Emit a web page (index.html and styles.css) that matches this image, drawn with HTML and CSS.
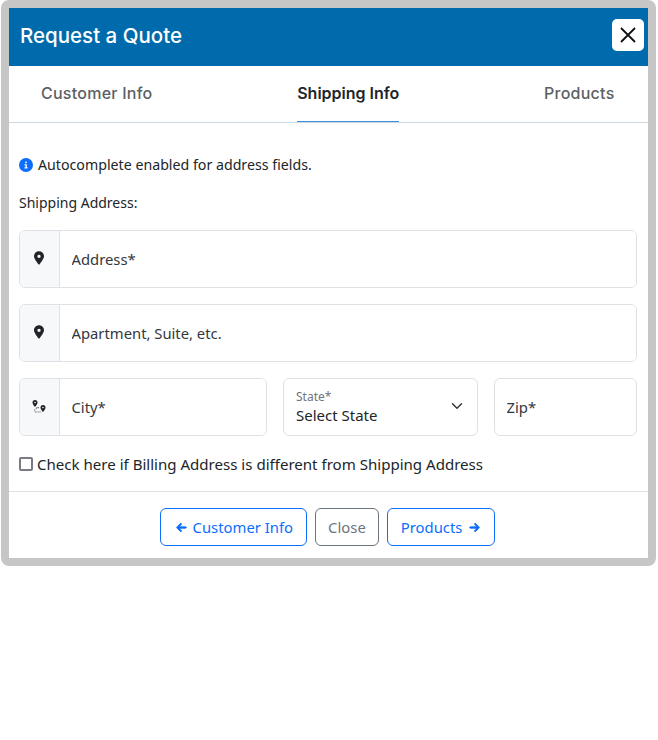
FILE: index.html
```html
<!DOCTYPE html>
<html lang="en">
<head>
<meta charset="utf-8">
<title>Request a Quote</title>
<link rel="stylesheet" href="styles.css">
</head>
<body>
<div class="modal">
  <header class="head">
    <h1 class="title">Request a Quote</h1>
    <button class="close-x" type="button" aria-label="Close">
      <svg viewBox="0 0 16 16" width="16" height="16"><path d="M1 1l14 14M15 1L1 15" stroke="#111" stroke-width="1.8" fill="none"/></svg>
    </button>
  </header>
  <nav class="tabs">
    <a class="tab">Customer Info</a>
    <a class="tab active">Shipping Info</a>
    <a class="tab">Products</a>
  </nav>
  <main class="body">
    <p class="info">
      <svg class="info-icon" viewBox="0 0 512 512"><path fill="#0d6efd" d="M256 512A256 256 0 1 0 256 0a256 256 0 1 0 0 512zM216 336h24V272H216c-13.3 0-24-10.7-24-24s10.7-24 24-24h48c13.3 0 24 10.7 24 24v88h8c13.3 0 24 10.7 24 24s-10.7 24-24 24H216c-13.3 0-24-10.7-24-24s10.7-24 24-24zm40-208a32 32 0 1 1 0 64 32 32 0 1 1 0-64z"/></svg>
      Autocomplete enabled for address fields.
    </p>
    <p class="section">Shipping Address:</p>
    <div class="group">
      <span class="addon"><svg class="pin" viewBox="0 0 384 512"><path fill="#212529" d="M215.7 499.2C267 435 384 279.4 384 192C384 86 298 0 192 0S0 86 0 192c0 87.4 117 243 168.3 307.2c12.3 15.3 35.1 15.3 47.4 0zM192 128a64 64 0 1 1 0 128 64 64 0 1 1 0-128z"/></svg></span>
      <input class="field" placeholder="Address*">
    </div>
    <div class="group">
      <span class="addon"><svg class="pin" viewBox="0 0 384 512"><path fill="#212529" d="M215.7 499.2C267 435 384 279.4 384 192C384 86 298 0 192 0S0 86 0 192c0 87.4 117 243 168.3 307.2c12.3 15.3 35.1 15.3 47.4 0zM192 128a64 64 0 1 1 0 128 64 64 0 1 1 0-128z"/></svg></span>
      <input class="field" placeholder="Apartment, Suite, etc.">
    </div>
    <div class="row">
      <div class="group city">
        <span class="addon"><svg class="route" viewBox="0 0 16 16"><path fill="#212529" d="M4 1a2.500 2.500 0 0 0-2.500 2.500C1.500 5.300 4 8 4 8s2.500-2.700 2.500-4.500A2.500 2.500 0 0 0 4 1zm0 1.700a.8.8 0 1 1 0 1.600.8.8 0 0 1 0-1.600zM12 6a2.500 2.500 0 0 0-2.500 2.500C9.500 10.300 12 13 12 13s2.500-2.700 2.500-4.500A2.500 2.500 0 0 0 12 6zm0 1.700a.8.8 0 1 1 0 1.600.8.8 0 0 1 0-1.600z"/><path d="M5.500 8.500H8M8 8.500l-4.500 2 .5 2.500H10.500" stroke="#555" stroke-width="1" stroke-dasharray="1 1" fill="none"/></svg></span>
        <input class="field" placeholder="City*">
      </div>
      <div class="state">
        <div class="state-text">
          <span class="state-label">State*</span>
          <span class="state-value">Select State</span>
        </div>
        <svg class="chev" viewBox="0 0 16 16"><path d="M2 5l6 6 6-6" stroke="#343a40" stroke-width="2" stroke-linecap="round" stroke-linejoin="round" fill="none"/></svg>
      </div>
      <input class="zip" placeholder="Zip*">
    </div>
    <label class="check"><input class="box" type="checkbox"> Check here if Billing Address is different from Shipping Address</label>
  </main>
  <footer class="foot">
    <button class="btn first" type="button"><svg class="arrow" viewBox="0 0 448 512"><path fill="#0d6efd" stroke="#0d6efd" stroke-width="40" d="M9.400 233.400c-12.500 12.500-12.500 32.800 0 45.300l160 160c12.500 12.500 32.800 12.500 45.300 0s12.500-32.800 0-45.300L109.200 288 416 288c17.700 0 32-14.300 32-32s-14.300-32-32-32l-306.700 0L214.600 118.600c12.500-12.500 12.500-32.800 0-45.300s-32.800-12.500-45.300 0l-160 160z"/></svg>Customer Info</button>
    <button class="btn muted" type="button">Close</button>
    <button class="btn last" type="button">Products<svg class="arrow" viewBox="0 0 448 512"><path fill="#0d6efd" stroke="#0d6efd" stroke-width="40" d="M438.600 278.600c12.500-12.500 12.500-32.800 0-45.300l-160-160c-12.500-12.500-32.800-12.500-45.300 0s-12.500 32.800 0 45.300L338.800 224 32 224c-17.700 0-32 14.300-32 32s14.300 32 32 32l306.700 0L233.400 393.400c-12.500 12.500-12.500 32.800 0 45.300s32.800 12.500 45.300 0l160-160z"/></svg></button>
  </footer>
</div>
</body>
</html>
```
FILE: styles.css
```css
* { box-sizing: border-box; }
html, body { margin: 0; padding: 0; background: #fff; }
body { font-family: "Noto Sans", "Open Sans", sans-serif; color: #212529; font-size: 15px; }
.modal { width: 655px; height: 566px; margin-left: 1px; border: 8px solid #c6c6c6; border-radius: 8px; background: #fff; display: flex; flex-direction: column; overflow: hidden; }
.head { height: 58px; background: #006bac; display: flex; align-items: center; justify-content: space-between; padding: 0 4px 4px 11px; flex: none; }
.title { margin: 0; font-family: Inter, Roboto, sans-serif; font-weight: 500; font-size: 20.5px; color: #fff; }
.close-x { width: 32px; height: 32px; padding: 0; border: 0; border-radius: 5px; background: #fff; display: flex; align-items: center; justify-content: center; }
.tabs { height: 57px; flex: none; display: flex; justify-content: space-between; padding: 0 33.500px 0 32px; border-bottom: 1px solid #cbd8e0; }
.tab { font-family: Inter, Roboto, sans-serif; font-weight: 500; font-size: 16px; letter-spacing: 0.25px; color: #5c5f63; line-height: 55px; height: 56px; }
.active { color: #212529; font-weight: 600; letter-spacing: 0; border-bottom: 1px solid #3d8fe0; }
.body { flex: 1; padding: 0 11px 0 10px; }
.info { margin: 32px 0 0; height: 20px; line-height: 18px; display: flex; align-items: center; gap: 5px; font-size: 14.2px; }
.info-icon { width: 14px; height: 14px; flex: none; }
.section { margin: 18px 0 0; height: 20px; line-height: 20px; font-size: 14px; }
.group { display: flex; height: 58px; margin-top: 16px; border: 1px solid #dee2e6; border-radius: 6px; overflow: hidden; }
.section + .group { margin-top: 17px; }
.addon { width: 40px; flex: none; background: #f7f8fa; border-right: 1px solid #dee2e6; display: flex; align-items: center; justify-content: center; padding-right: 1px; }
.pin { width: 10px; height: 14px; margin-top: -2px; }
.route { width: 16px; height: 16px; margin-top: -1px; }
.field, .zip { border: 0; outline: 0; min-width: 0; flex: 1; padding: 0 12px 0 11.5px; font: inherit; font-size: 14.8px; color: #212529; background: #fff; }
.field::placeholder, .zip::placeholder { color: #33383d; opacity: 1; }
.row { display: flex; gap: 16px; margin-top: 16px; }
.row .group { margin-top: 0; }
.city { width: 248px; flex: none; }
.state { width: 195px; height: 58px; flex: none; border: 1px solid #dee2e6; border-radius: 6px; display: flex; align-items: center; justify-content: space-between; padding: 0 14px 0 12px; }
.state-text { display: flex; flex-direction: column; }
.state-label { font-size: 12px; line-height: 17px; color: #6f757b; }
.state-value { font-size: 15px; line-height: 21px; color: #212529; }
.chev { width: 12px; height: 12px; margin-top: -2px; }
.zip { width: 143px; height: 58px; flex: none; border: 1px solid #dee2e6; border-radius: 6px; }
.check { display: flex; align-items: center; gap: 4px; margin-top: 18px; height: 20px; font-size: 15.07px; }
.box { appearance: none; width: 14px; height: 14px; margin: 0; border: 2px solid #7a7a85; border-radius: 2px; background: #fff; }
.foot { border-top: 1px solid #dee2e6; display: flex; justify-content: center; align-items: flex-start; gap: 8px; padding: 16px 2px 0 0; height: 67px; flex: none; }
.btn { height: 38px; padding: 0 12px; background: #fff; border: 1px solid #0d6efd; border-radius: 6px; color: #0d6efd; font: inherit; font-size: 14.85px; display: flex; align-items: center; gap: 6px; }
.first { padding: 0 13px 0 15px; }
.last { padding: 0 14px 0 13px; gap: 7px; }
.muted { border-color: #6c757d; color: #6c757d; }
.arrow { width: 11px; height: 11px; }
```
